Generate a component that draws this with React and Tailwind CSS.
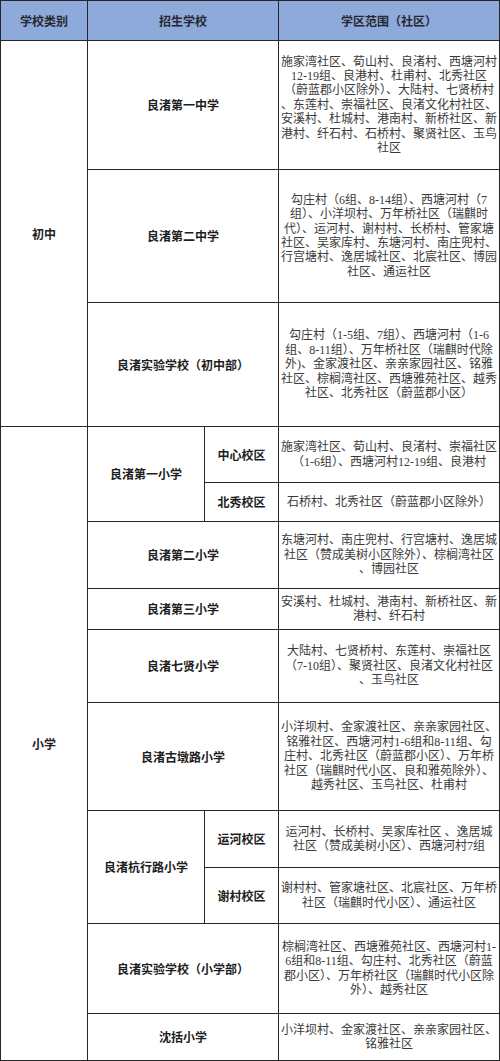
import React from 'react';

const body = '"Liberation Serif", "Noto Sans CJK SC", serif';
const bold = '"Noto Sans CJK SC", sans-serif';

function Range({ lines }) {
  return (
    <div
      className="bg-white flex flex-col items-center justify-center text-center text-[12px] leading-[14.4px] text-[#3a3a3a]"
      style={{ fontFamily: body }}
    >
      {lines.map((l, i) => (
        <div key={i} className="whitespace-nowrap">{l}</div>
      ))}
    </div>
  );
}

function Name({ children, className = '' }) {
  return (
    <div
      className={`bg-white flex items-center justify-center text-center text-[12px] font-bold text-[#1e1e1e] ${className}`}
      style={{ fontFamily: bold }}
    >
      {children}
    </div>
  );
}

function Head({ children, className = '' }) {
  return (
    <div
      className={`bg-[#8eaadb] flex items-center justify-center text-[12px] font-semibold text-[#27272f] ${className}`}
      style={{ fontFamily: bold }}
    >
      {children}
    </div>
  );
}

export default function App() {
  return (
    <div className="w-[500px] bg-white">
      <div className="grid grid-cols-[86px_116px_73px_220px] grid-rows-[39px_128px_132px_123px_55px_38px_66px_40px_72px_107px_56px_55px_89px_46px] gap-px p-px bg-[#262626]">
        {/* header */}
        <Head>学校类别</Head>
        <Head className="col-span-2">招生学校</Head>
        <Head>学区范围（社区）</Head>

        {/* 初中 */}
        <Name className="row-span-3">初中</Name>
        <Name className="col-span-2">良渚第一中学</Name>
        <Range
          lines={[
            '施家湾社区、荀山村、良渚村、西塘河村',
            '12-19组、良港村、杜甫村、北秀社区',
            '（蔚蓝郡小区除外）、大陆村、七贤桥村',
            '、东莲村、崇福社区、良渚文化村社区、',
            '安溪村、杜城村、港南村、新桥社区、新',
            '港村、纤石村、石桥村、聚贤社区、玉鸟',
            '社区',
          ]}
        />
        <Name className="col-span-2">良渚第二中学</Name>
        <Range
          lines={[
            '勾庄村（6组、8-14组）、西塘河村（7',
            '组）、小洋坝村、万年桥社区（瑞麒时',
            '代）、运河村、谢村村、长桥村、管家塘',
            '社区、吴家库村、东塘河村、南庄兜村、',
            '行宫塘村、逸居城社区、北宸社区、博园',
            '社区、通运社区',
          ]}
        />
        <Name className="col-span-2">良渚实验学校（初中部）</Name>
        <Range
          lines={[
            '勾庄村（1-5组、7组）、西塘河村（1-6',
            '组、8-11组）、万年桥社区（瑞麒时代除',
            '外)、金家渡社区、亲亲家园社区、铭雅',
            '社区、棕榈湾社区、西塘雅苑社区、越秀',
            '社区、北秀社区（蔚蓝郡小区）',
          ]}
        />

        {/* 小学 */}
        <Name className="row-span-10">小学</Name>
        <Name className="row-span-2">良渚第一小学</Name>
        <Name>中心校区</Name>
        <Range
          lines={[
            '施家湾社区、荀山村、良渚村、崇福社区',
            '（1-6组）、西塘河村12-19组、良港村',
          ]}
        />
        <Name>北秀校区</Name>
        <Range lines={['石桥村、北秀社区（蔚蓝郡小区除外）']} />

        <Name className="col-span-2">良渚第二小学</Name>
        <Range
          lines={[
            '东塘河村、南庄兜村、行宫塘村、逸居城',
            '社区（赞成美树小区除外）、棕榈湾社区',
            '、博园社区',
          ]}
        />
        <Name className="col-span-2">良渚第三小学</Name>
        <Range lines={['安溪村、杜城村、港南村、新桥社区、新', '港村、纤石村']} />
        <Name className="col-span-2">良渚七贤小学</Name>
        <Range
          lines={[
            '大陆村、七贤桥村、东莲村、崇福社区',
            '（7-10组）、聚贤社区、良渚文化村社区',
            '、玉鸟社区',
          ]}
        />
        <Name className="col-span-2">良渚古墩路小学</Name>
        <Range
          lines={[
            '小洋坝村、金家渡社区、亲亲家园社区、',
            '铭雅社区、西塘河村1-6组和8-11组、勾',
            '庄村、北秀社区（蔚蓝郡小区）、万年桥',
            '社区（瑞麒时代小区、良和雅苑除外）、',
            '越秀社区、玉鸟社区、杜甫村',
          ]}
        />

        <Name className="row-span-2">良渚杭行路小学</Name>
        <Name>运河校区</Name>
        <Range
          lines={['运河村、长桥村、吴家库社区 、逸居城', '社区（赞成美树小区）、西塘河村7组']}
        />
        <Name>谢村校区</Name>
        <Range
          lines={['谢村村、管家塘社区、北宸社区、万年桥', '社区（瑞麒时代小区）、通运社区']}
        />

        <Name className="col-span-2">良渚实验学校（小学部）</Name>
        <Range
          lines={[
            '棕榈湾社区、西塘雅苑社区、西塘河村1-',
            '6组和8-11组、勾庄村、北秀社区（蔚蓝',
            '郡小区）、万年桥社区（瑞麒时代小区除',
            '外）、越秀社区',
          ]}
        />
        <Name className="col-span-2">沈括小学</Name>
        <Range lines={['小洋坝村、金家渡社区、亲亲家园社区、', '铭雅社区']} />
      </div>
    </div>
  );
}
